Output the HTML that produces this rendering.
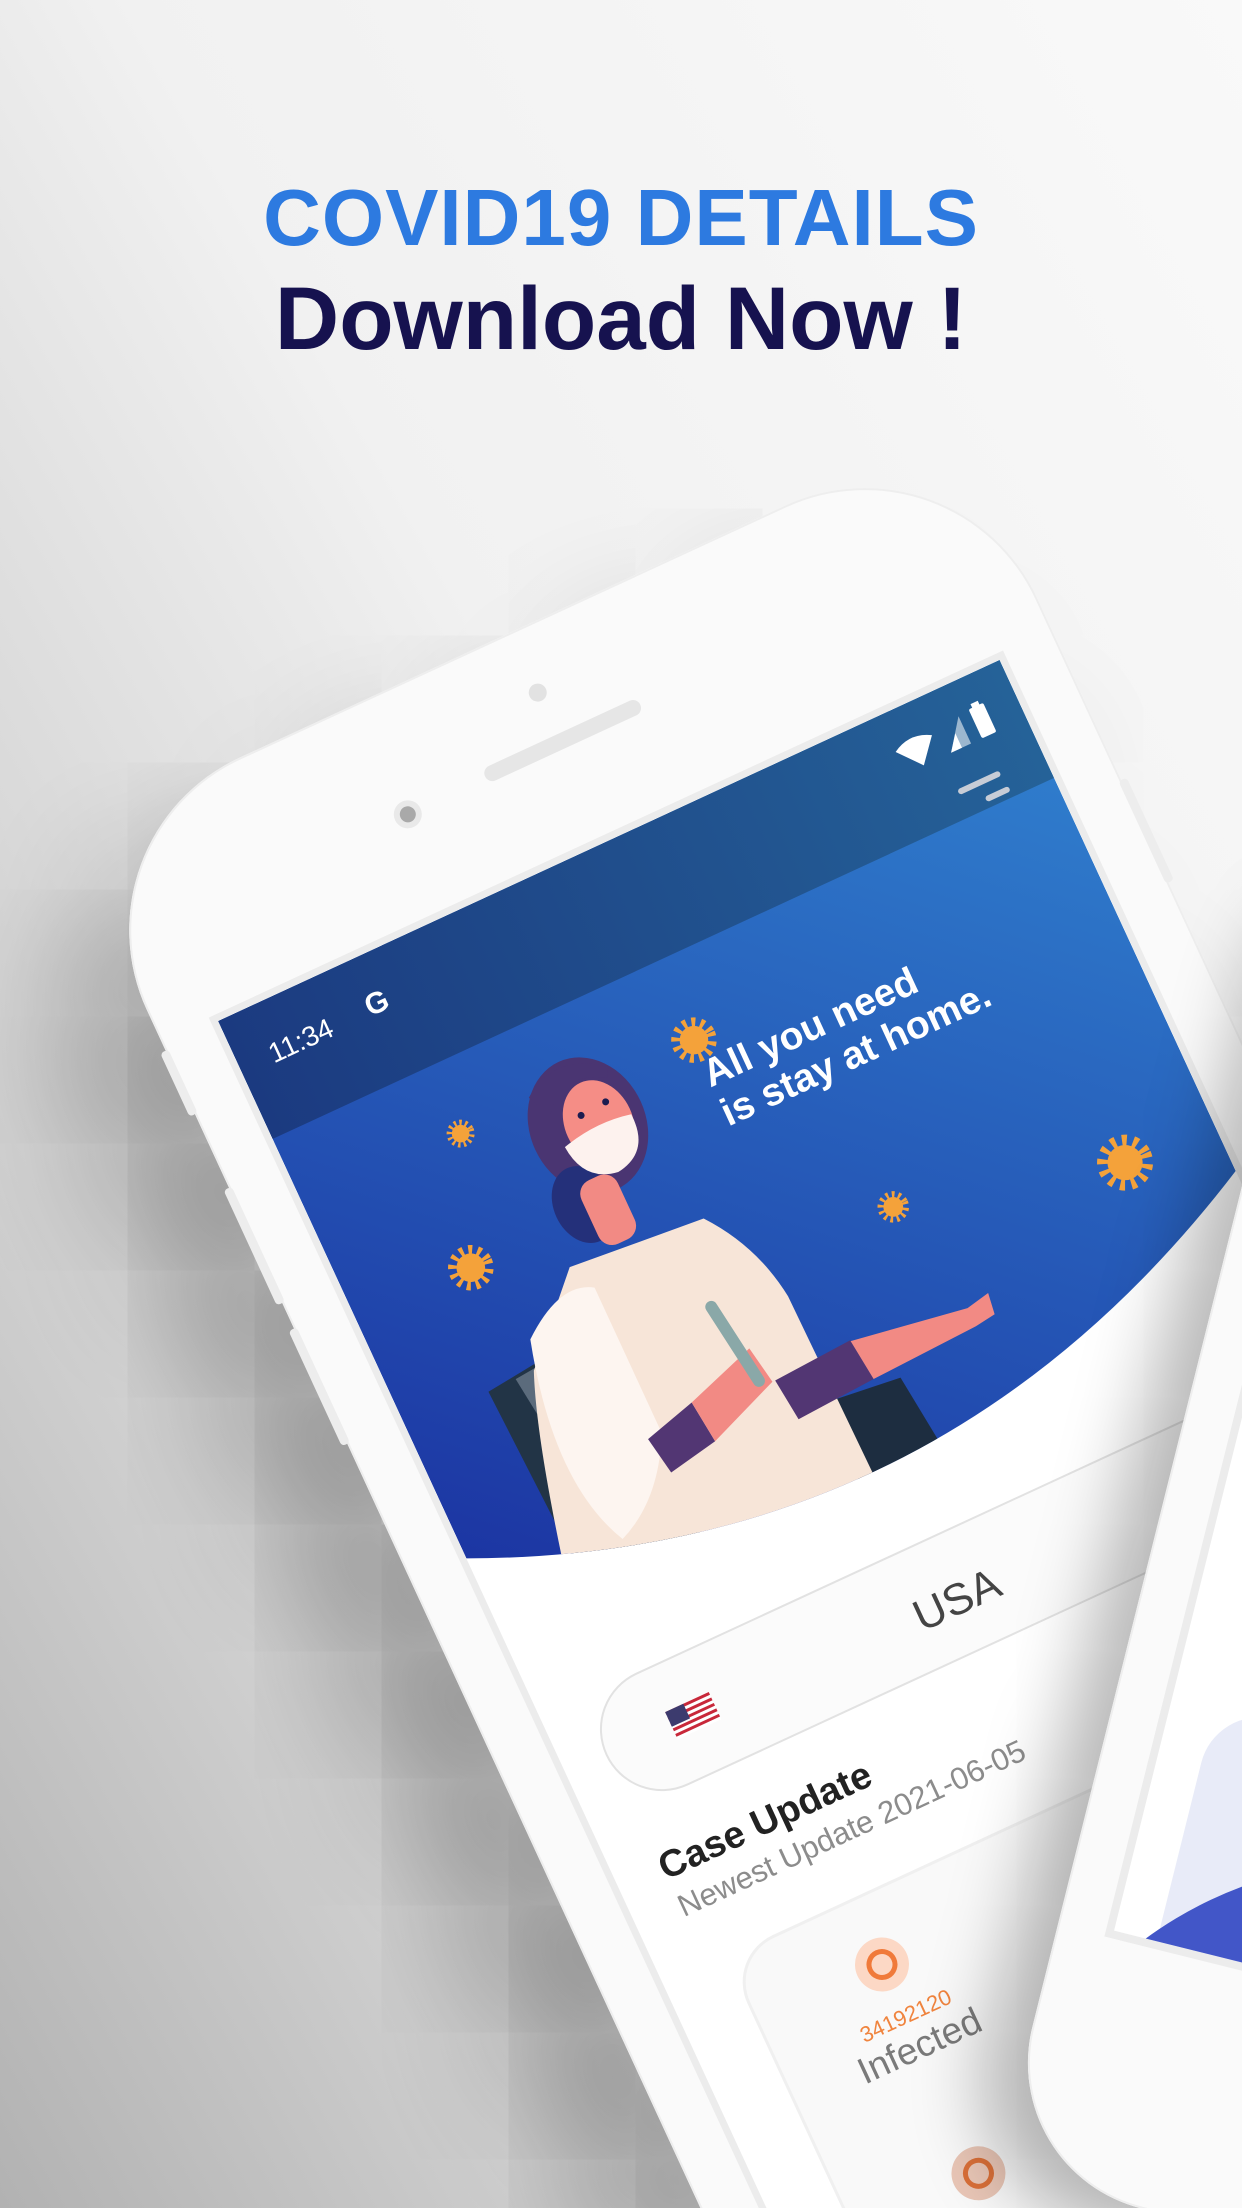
<!DOCTYPE html>
<html><head><meta charset="utf-8">
<style>
*{margin:0;padding:0;box-sizing:border-box}
html,body{width:1242px;height:2208px;overflow:hidden}
body{position:relative;font-family:"Liberation Sans",sans-serif;
background:linear-gradient(to bottom left,#f9f9f9 0%,#f1f1f1 45%,#d2d2d2 75%,#b2b2b2 100%);}
.wrap{position:absolute;left:0;top:0;width:1242px;height:2208px;overflow:hidden}
.t1,.t2{position:absolute;left:0;width:1242px;text-align:center;font-weight:bold;white-space:nowrap}
.t1{top:168px;font-size:80px;line-height:100px;color:#2d7ae0;letter-spacing:1px}
.t2{top:268px;font-size:89px;line-height:100px;color:#16124f}
.phone{position:absolute;left:158px;top:791px;width:981px;height:2300px;border-radius:190px;background:#fafafa;
transform-origin:60px 230px;transform:rotate(-24.8deg);
box-shadow:-90px 70px 150px 10px rgba(0,0,0,.30), inset 0 0 0 2px #eeeeee;}
.screen{position:absolute;left:60px;top:230px;width:861px;height:2000px;background:#fff;box-shadow:0 0 0 7px #ececec;overflow:hidden}
.btn{position:absolute;background:#ededed;border-radius:4px}
.phone2{position:absolute;left:1336px;top:809px;width:900px;height:1405px;border-radius:150px;background:#fafafa;
transform-origin:0 0;transform:rotate(14deg);box-shadow:-40px 30px 70px rgba(0,0,0,.28), inset 0 0 0 2px #eee}
.screen2{position:absolute;left:48px;top:0;width:820px;height:1150px;background:#fff;border:8px solid #ececec;overflow:hidden}
</style></head><body>
<div class="wrap">
<div class="t1">COVID19 DETAILS</div>
<div class="t2">Download Now !</div>

<div class="phone">
  <div class="btn" style="left:-6px;top:235px;width:9px;height:70px"></div>
  <div class="btn" style="left:-6px;top:386px;width:9px;height:127px"></div>
  <div class="btn" style="left:-6px;top:541px;width:9px;height:127px"></div>
  <div class="btn" style="left:978px;top:390px;width:9px;height:113px"></div>
  <div style="position:absolute;left:405px;top:112px;width:171px;height:16px;border-radius:8px;background:#e6e6e6"></div>
  <div style="position:absolute;left:305px;top:108px;width:28px;height:28px;border-radius:50%;background:#e9e9e9"></div>
  <div style="position:absolute;left:311px;top:114px;width:16px;height:16px;border-radius:50%;background:#a9a9a9"></div>
  <div style="position:absolute;left:479px;top:57px;width:18px;height:18px;border-radius:50%;background:#e2e2e2"></div>
  <div class="screen">
  <svg width="861" height="1700" viewBox="0 0 861 1700" xmlns="http://www.w3.org/2000/svg">
    <defs>
      <linearGradient id="ill" x1="1" y1="0" x2="0" y2="1">
        <stop offset="0" stop-color="#3183d0"/><stop offset="1" stop-color="#192a9c"/>
      </linearGradient>
      <linearGradient id="tb" x1="0" y1="0" x2="1" y2="0">
        <stop offset="0" stop-color="#1b3a80"/><stop offset="1" stop-color="#256298"/>
      </linearGradient>
      <clipPath id="wave"><path d="M0,0 H861 V563 Q430,790 0,592 Z"/></clipPath>
      <g id="vir"><circle r="11" fill="#f4a23a"/><circle r="14" fill="none" stroke="#f4a23a" stroke-width="7" stroke-dasharray="3 4"/></g>
    </defs>
    <g clip-path="url(#wave)">
      <rect width="861" height="800" fill="url(#ill)"/>
      <rect width="861" height="130" fill="url(#tb)"/>
      <use href="#vir" transform="translate(424,217) scale(1.3)"/>
      <use href="#vir" transform="translate(173,204) scale(0.8)"/>
      <use href="#vir" transform="translate(126,330) scale(1.3)"/>
      <use href="#vir" transform="translate(764,509) scale(1.6)"/>
      <use href="#vir" transform="translate(535,452) scale(0.9)"/>
      <path d="M90,450 L180,440 L230,700 L100,700 Z" fill="#223446"/>
      <path d="M120,450 L175,445 L215,700 L150,700 Z" fill="#5b6b7c"/>
      <path d="M380,600 L470,610 L480,700 L390,700 Z" fill="#1d2d40"/>
      <ellipse cx="292" cy="250" rx="58" ry="70" fill="#4a3572"/>
      <ellipse cx="255" cy="320" rx="30" ry="40" fill="#24307a"/>
      <path d="M216,371 L358,383 Q395,430 402,489 L405,700 L72,700 Q110,520 140,450 Z" fill="#f7e5d8"/>
      <path d="M150,420 Q200,380 230,400 L230,560 Q200,620 150,640 Q110,560 150,420 Z" fill="#fdf5f0"/>
      <path d="M215,560 L270,545 L275,590 L222,600 Z" fill="#523673"/>
      <path d="M270,545 L345,520 L352,560 L275,590 Z" fill="#f28a84"/>
      <rect x="328" y="460" width="12" height="100" rx="6" fill="#8aa8a8" transform="rotate(-8 334 510)"/>
      <path d="M355,560 L440,555 L445,600 L360,605 Z" fill="#523673"/>
      <path d="M440,556 L560,575 L585,570 L582,592 L560,595 L445,600 Z" fill="#f28a84"/>
      <rect x="255" y="300" width="40" height="70" rx="15" fill="#f28a84"/>
      <ellipse cx="303" cy="252" rx="34" ry="44" fill="#f58d86"/>
      <path d="M262,260 Q300,250 336,258 Q338,300 300,305 Q265,300 262,260 Z" fill="#fdf2ee"/>
      <circle cx="290" cy="238" r="3.5" fill="#1c1c50"/><circle cx="318" cy="236" r="3.5" fill="#1c1c50"/>
      <path d="M250,200 Q290,170 335,205 L330,215 Q290,190 262,225 Z" fill="#4a3572"/>
      <text x="419" y="267" font-family="Liberation Sans" font-weight="bold" font-size="39" fill="#fff">All you need</text>
      <text x="419" y="310" font-family="Liberation Sans" font-weight="bold" font-size="39" fill="#fff">is stay at home.</text>
    </g>
    <text x="33" y="62" font-family="Liberation Sans" font-size="28" fill="#fff">11:34</text>
    <text x="140" y="60" font-family="Liberation Sans" font-weight="bold" font-size="30" fill="#fff">G</text>
    <path d="M728,40 Q748,28 768,40 L748,64 Z" fill="#fff"/>
    <path d="M778,64 L800,34 L800,64 Z" fill="#fff" opacity=".55"/>
    <path d="M778,64 L790,48 L790,64 Z" fill="#fff"/>
    <rect x="812" y="32" width="16" height="32" rx="2" fill="#fff"/>
    <rect x="816" y="28" width="8" height="5" fill="#fff"/>
    <rect x="768" y="100" width="46" height="6" rx="3" fill="#c7ccd6"/>
    <rect x="790" y="118" width="26" height="6" rx="3" fill="#c7ccd6"/>
    <rect x="45" y="768" width="900" height="122" rx="61" fill="#fbfbfb" stroke="#e2e2e2" stroke-width="2"/>
    <g transform="translate(116,815)">
      <rect width="48" height="30" fill="#fff"/>
      <rect y="0" width="48" height="3" fill="#c8283a"/><rect y="6" width="48" height="3" fill="#c8283a"/>
      <rect y="12" width="48" height="3" fill="#c8283a"/><rect y="18" width="48" height="3" fill="#c8283a"/>
      <rect y="24" width="48" height="3" fill="#c8283a"/>
      <rect width="20" height="16" fill="#3c3b6e"/>
    </g>
    <text x="428" y="850" text-anchor="middle" font-family="Liberation Sans" font-size="44" fill="#444">USA</text>
    <text x="46" y="968" font-family="Liberation Sans" font-weight="bold" font-size="38" fill="#222">Case Update</text>
    <text x="47" y="1009" font-family="Liberation Sans" font-size="31" fill="#8c8c8c">Newest Update 2021-06-05</text>
    <rect x="70" y="1064" width="900" height="700" rx="50" fill="#f9f9f9" stroke="#f0f0f0" stroke-width="3"/>
    <circle cx="207" cy="1135" r="27" fill="#fcd8c5"/>
    <circle cx="207" cy="1135" r="13" fill="none" stroke="#f07a3a" stroke-width="5"/>
    <text x="207" y="1199" text-anchor="middle" font-family="Liberation Sans" font-size="22" fill="#f0843e">34192120</text>
    <text x="207" y="1237" text-anchor="middle" font-family="Liberation Sans" font-size="37" fill="#7a7a7a">Infected</text>
    <circle cx="207" cy="1365" r="27" fill="#e9c6b6"/>
    <circle cx="207" cy="1365" r="13" fill="none" stroke="#d96f38" stroke-width="5"/>
  </svg>
  </div>
</div>

<div class="phone2">
  <div class="screen2">
    <div style="position:absolute;left:44px;top:890px;width:900px;height:400px;border-radius:60px 0 0 0;background:#e8ebf8"></div>
    <div style="position:absolute;left:-60px;top:990px;width:800px;height:800px;border-radius:50%;background:#4256c8"></div>
  </div>
</div>
</div>
</body></html>
